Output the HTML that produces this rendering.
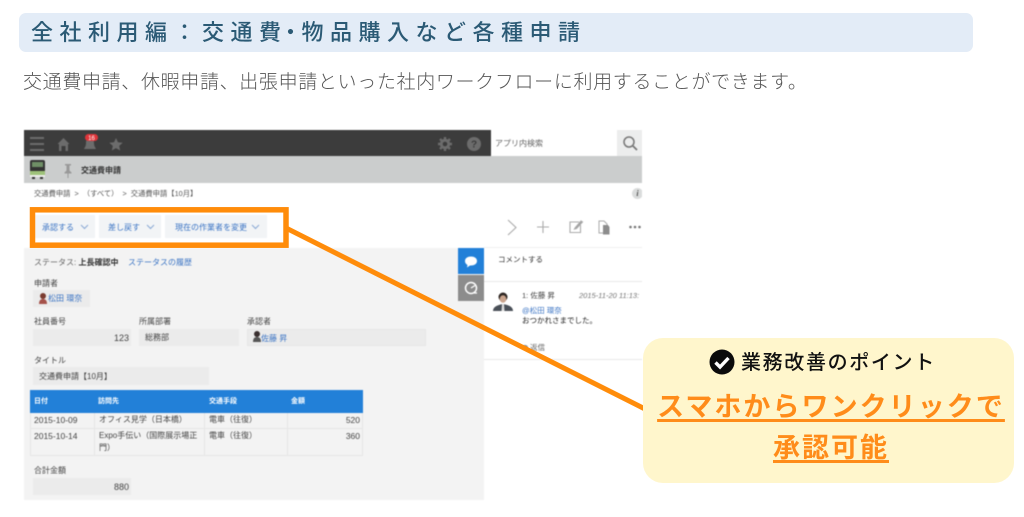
<!DOCTYPE html>
<html lang="ja"><head><meta charset="utf-8"><title>全社利用編</title>
<style>
html,body{margin:0;padding:0;background:#fff;}
body{width:1024px;height:517px;position:relative;overflow:hidden;font-family:"Liberation Sans","Noto Sans CJK JP",sans-serif;}
.a{position:absolute;white-space:nowrap;}
#s{position:absolute;left:24px;top:130px;width:618px;height:370px;overflow:hidden;background:#fff;filter:blur(.5px);}
#s .t{position:absolute;white-space:nowrap;font-size:8px;line-height:10px;color:#444;margin-top:1px;}
#s .b{color:#3b74c4;}
#s .r{position:absolute;}
#s .f{position:absolute;background:#ebebeb;}
</style></head><body>

<div class="a" style="left:19px;top:13px;width:954px;height:39px;background:#e3ecf7;border-radius:7px;"></div>
<div class="a" style="left:31px;top:18px;font-size:22px;line-height:30px;font-weight:500;letter-spacing:6.500px;color:#2b5a75;">全社利用編：交通費<span style="letter-spacing:0;margin-left:-8px;">・</span>物品購入など各種申請</div>
<div class="a" style="left:23px;top:69px;font-size:19px;line-height:28px;letter-spacing:.66px;color:#555;font-weight:300;">交通費申請、休暇申請、出張申請といった社内ワークフローに利用することができます。</div>

<div id="s">
  <!-- top bars -->
  <div class="r" style="left:0;top:0;width:467px;height:26px;background:#3c3c3c;"></div>
  <div class="r" style="left:593px;top:0;width:25px;height:26px;background:#eceded;"></div>
  <div class="r" style="left:0;top:26px;width:618px;height:27px;background:#cbcdcd;"></div>
  <div class="t" style="left:471px;top:8px;color:#666;">アプリ内検索</div>
  <svg class="r" style="left:0;top:0" width="618" height="53" viewBox="0 0 618 53">
    <g fill="#6c6c6c">
      <rect x="6" y="7" width="14" height="2"/><rect x="6" y="13" width="14" height="2"/><rect x="6" y="19" width="14" height="2"/>
      <path d="M39.500 8l6 6h-1.500v7h-2.500v-5h-4v5h-2.500v-7H33.500z"/>
      <path d="M66 8c3 0 4 2 4 5 0 3 1 4 2 6H60c1-2 2-3 2-6 0-3 1-5 4-5z"/>
      <path d="M92 8l2 4.300 4.700.5-3.500 3.100 1 4.600-4.200-2.400-4.200 2.400 1-4.600-3.500-3.100 4.700-.5z"/>
      <circle cx="421" cy="14" r="5.200"/><circle cx="450" cy="14" r="7"/>
    </g>
    <g stroke="#6c6c6c" stroke-width="2.400">
      <path d="M421 7v14M414 14h14M416 9l10 10M426 9l-10 10"/>
    </g>
    <circle cx="421" cy="14" r="2.300" fill="#3c3c3c"/>
    <text x="450" y="17.500" font-size="10" font-weight="bold" text-anchor="middle" fill="#3c3c3c" font-family="Liberation Sans">?</text>
    <rect x="61" y="4" width="13" height="7" rx="3.500" fill="#e0353a"/>
    <text x="67.500" y="10" font-size="6" text-anchor="middle" fill="#fff" font-family="Liberation Sans">16</text>
    <circle cx="605" cy="12" r="5" fill="none" stroke="#777" stroke-width="1.500"/>
    <path d="M609 16l4 4" stroke="#777" stroke-width="1.800"/>
    <!-- train -->
    <rect x="6" y="30" width="15" height="12" rx="2" fill="#333"/>
    <rect x="8" y="32" width="11" height="5" fill="#6f8f66"/>
    <rect x="6" y="41" width="15" height="4" fill="#9ec27a"/>
    <rect x="6" y="45" width="15" height="2" fill="#eee"/>
    <rect x="8" y="47" width="3" height="2" fill="#333"/><rect x="16" y="47" width="3" height="2" fill="#333"/>
    <!-- pin -->
    <path d="M41 34h6v1.500h-1.500v5l2 2v1h-3v4.500h-1v-4.500h-3v-1l2-2v-5H41z" fill="#999"/>
  </svg>
  <div class="t" style="left:57px;top:35px;font-weight:bold;color:#333;">交通費申請</div>

  <div class="t" style="left:10px;top:58px;font-size:7.300px;word-spacing:2px;color:#555;">交通費申請 &gt; （すべて） &gt; 交通費申請【10月】</div>
  <div class="r" style="left:608px;top:58px;width:11px;height:11px;border-radius:50%;background:#dadcdc;color:#555;font:italic bold 8px/11px 'Liberation Serif';text-align:center;">i</div>

  <!-- toolbar -->
  <div class="r" style="left:9px;top:85px;width:62px;height:23px;background:#f2f4f6;"></div>
  <div class="r" style="left:75px;top:85px;width:62px;height:23px;background:#f2f4f6;"></div>
  <div class="r" style="left:141px;top:85px;width:102px;height:23px;background:#f2f4f6;"></div>
  <div class="t b" style="left:18px;top:92px;">承認する</div>
  <div class="t b" style="left:84px;top:92px;">差し戻す</div>
  <div class="t b" style="left:151px;top:92px;">現在の作業者を変更</div>
  <svg class="r" style="left:0;top:80px" width="618" height="36" viewBox="0 0 618 36">
    <g fill="none" stroke="#8aa9d4" stroke-width="1">
      <path d="M57 15l3.500 3.500 3.500-3.500M123 15l3.500 3.500 3.500-3.500M228 15l3.500 3.500 3.500-3.500"/>
    </g>
    <g fill="none" stroke="#aaa" stroke-width="1.100">
      <path d="M484 10l8 7.500-8 7.500"/>
      <path d="M519 11v12M513 17h12"/>
      <path d="M555 12h-9v10.500h10.500V15"/>
      <path d="M551 18l6-7 1.500 1-6 6.500-2 .5z" fill="#999"/>
    </g>
    <path d="M575 11h5l3 3v9h-8z" fill="none" stroke="#aaa"/>
    <path d="M579 15h5l1.500 2v7.500H579z" fill="#8c8c8c"/>
    <g fill="#777"><circle cx="606.500" cy="17" r="1.300"/><circle cx="611" cy="17" r="1.300"/><circle cx="615.500" cy="17" r="1.300"/></g>
  </svg>

  <!-- left panel -->
  <div class="r" style="left:0;top:118px;width:460px;height:252px;background:#f3f3f3;"></div>
  <div class="r" style="left:460px;top:117px;width:158px;height:1px;background:#f0f0f0;"></div>

  <div class="t" style="left:10px;top:127px;color:#666;">ステータス: <b style="color:#333">上長確認中</b></div>
  <div class="t b" style="left:104px;top:127px;">ステータスの履歴</div>
  <div class="t" style="left:10px;top:148px;">申請者</div>
  <div class="f" style="left:9px;top:160px;width:57px;height:17px;"></div>
  <svg class="r" style="left:14px;top:162px" width="10" height="13"><circle cx="5" cy="4" r="3" fill="#7a3b30"/><path d="M1 12c0-4 2-5 4-5s4 1 4 5z" fill="#a5524a"/></svg>
  <div class="t b" style="left:24px;top:163px;">松田 環奈</div>

  <div class="t" style="left:10px;top:186px;">社員番号</div>
  <div class="f" style="left:9px;top:199px;width:98px;height:17px;"></div>
  <div class="t" style="left:79px;top:202px;width:26px;text-align:right;font-size:9px;">123</div>
  <div class="t" style="left:115px;top:186px;">所属部署</div>
  <div class="f" style="left:115px;top:199px;width:100px;height:17px;"></div>
  <div class="t" style="left:121px;top:202px;">総務部</div>
  <div class="t" style="left:223px;top:186px;">承認者</div>
  <div class="f" style="left:223px;top:199px;width:179px;height:17px;border:1px solid #e6e6e6;box-sizing:border-box;"></div>
  <svg class="r" style="left:228px;top:200px" width="10" height="13"><circle cx="5" cy="4" r="3" fill="#3a3030"/><path d="M1 12c0-4 2-5 4-5s4 1 4 5z" fill="#555"/></svg>
  <div class="t b" style="left:237px;top:203px;">佐藤 昇</div>

  <div class="t" style="left:10px;top:225px;">タイトル</div>
  <div class="f" style="left:9px;top:237px;width:176px;height:18px;"></div>
  <div class="t" style="left:15px;top:241px;">交通費申請【10月】</div>

  <!-- table -->
  <div class="r" style="left:6px;top:260px;width:333px;height:23px;background:#2280d8;"></div>
  <div class="t" style="left:10px;top:266px;color:#fff;font-size:7px;font-weight:bold;">日付</div>
  <div class="t" style="left:74px;top:266px;color:#fff;font-size:7px;font-weight:bold;">訪問先</div>
  <div class="t" style="left:185px;top:266px;color:#fff;font-size:7px;font-weight:bold;">交通手段</div>
  <div class="t" style="left:267px;top:266px;color:#fff;font-size:7px;font-weight:bold;">金額</div>
  <div class="r" style="left:6px;top:283px;width:333px;height:43px;border:1px solid #e6e6e6;border-top:0;box-sizing:border-box;"></div>
  <div class="r" style="left:6px;top:298px;width:333px;height:1px;background:#e6e6e6;"></div>
  <div class="r" style="left:70px;top:283px;width:1px;height:43px;background:#e6e6e6;"></div>
  <div class="r" style="left:180px;top:283px;width:1px;height:43px;background:#e6e6e6;"></div>
  <div class="r" style="left:263px;top:283px;width:1px;height:43px;background:#e6e6e6;"></div>
  <div class="t" style="left:10px;top:284px;font-size:8.500px;">2015-10-09</div>
  <div class="t" style="left:75px;top:284px;">オフィス見学（日本橋）</div>
  <div class="t" style="left:185px;top:284px;">電車（往復）</div>
  <div class="t" style="left:300px;top:284px;width:36px;text-align:right;font-size:8.500px;">520</div>
  <div class="t" style="left:10px;top:300px;font-size:8.500px;">2015-10-14</div>
  <div class="t" style="left:75px;top:300px;">Expo手伝い（国際展示場正</div>
  <div class="t" style="left:75px;top:312px;">門）</div>
  <div class="t" style="left:185px;top:300px;">電車（往復）</div>
  <div class="t" style="left:300px;top:300px;width:36px;text-align:right;font-size:8.500px;">360</div>

  <div class="t" style="left:10px;top:335px;">合計金額</div>
  <div class="f" style="left:9px;top:348px;width:98px;height:17px;"></div>
  <div class="t" style="left:70px;top:351px;width:35px;text-align:right;font-size:9px;">880</div>

  <!-- side tabs -->
  <div class="r" style="left:434px;top:118px;width:26px;height:26px;background:#2280d8;"></div>
  <div class="r" style="left:434px;top:145px;width:26px;height:26px;background:#8c8c8c;"></div>
  <svg class="r" style="left:434px;top:118px" width="26" height="54">
    <path d="M7 13c0-3 3-4.500 6-4.500s6 1.500 6 4.500-3 4.500-6 4.500l-1 0-3 2 .5-2.500C8 16 7 15 7 13z" fill="#fff"/>
    <circle cx="13" cy="40" r="5.500" fill="none" stroke="#fff" stroke-width="1.500"/>
    <path d="M13 40l4-2.500M16 45l3 0" stroke="#fff" stroke-width="1.300"/>
  </svg>

  <!-- comments -->
  <div class="t" style="left:474px;top:124px;font-size:7.500px;color:#333;">コメントする</div>
  <div class="r" style="left:460px;top:151px;width:158px;height:1px;background:#e9e9e9;"></div>
  <svg class="r" style="left:469px;top:161px" width="21" height="21">
    <path d="M0 20c0-4 4-6 10-7 6 1 10 3 10 7z" fill="#4a5058"/>
    <circle cx="10" cy="6" r="4.500" fill="#2e2723"/><ellipse cx="10" cy="8" rx="3.300" ry="3.800" fill="#caa48d"/>
    <path d="M9 13h2l.5 7h-3z" fill="#ddd"/>
  </svg>
  <div class="t" style="left:498px;top:160px;font-size:7.500px;">1: 佐藤 昇</div>
  <div class="t" style="left:555px;top:160px;font-size:7.500px;font-style:italic;color:#777;">2015-11-20 11:13:</div>
  <div class="t b" style="left:498px;top:175px;font-size:7.500px;">@松田 環奈</div>
  <div class="t" style="left:498px;top:185px;font-size:7.500px;color:#222;">おつかれさまでした。</div>
  <div class="r" style="left:498px;top:215px;width:6px;height:5px;border-radius:50%;background:#888;"></div>
  <div class="t" style="left:506px;top:212px;font-size:7.500px;color:#666;">返信</div>
  <div class="r" style="left:460px;top:229px;width:158px;height:1px;background:#e9e9e9;"></div>
</div>

<!-- orange annotation -->
<svg class="a" style="left:0;top:0" width="1024" height="517" viewBox="0 0 1024 517">
  <rect x="32.500" y="209.800" width="253.500" height="35.400" fill="none" stroke="#ff8c0a" stroke-width="5.500"/>
  <path d="M286 228L645 409" stroke="#ff8c0a" stroke-width="5" fill="none"/>
</svg>

<!-- callout -->
<div class="a" style="left:643px;top:338px;width:371px;height:145px;background:#fff6cc;border-radius:20px;"></div>
<svg class="a" style="left:709px;top:349px" width="26" height="26" viewBox="0 0 26 26">
  <circle cx="13" cy="13" r="12.500" fill="#0b0b0b"/>
  <path d="M6.500 13.500l4.500 4.500 8.500-9" fill="none" stroke="#fff" stroke-width="3.400"/>
</svg>
<div class="a" style="left:741px;top:349px;font-size:20px;line-height:29px;font-weight:500;letter-spacing:1.650px;color:#111;">業務改善のポイント</div>
<div class="a" style="left:655px;top:387px;width:352px;text-align:center;font-size:27px;line-height:40px;font-weight:700;letter-spacing:2.050px;color:#ff8c1a;text-decoration:underline;text-decoration-thickness:2.500px;text-underline-offset:3px;">スマホからワンクリックで</div>
<div class="a" style="left:655px;top:428px;width:352px;text-align:center;font-size:27px;line-height:40px;font-weight:700;letter-spacing:2px;color:#ff8c1a;text-decoration:underline;text-decoration-thickness:2.500px;text-underline-offset:3px;">承認可能</div>
</body></html>
